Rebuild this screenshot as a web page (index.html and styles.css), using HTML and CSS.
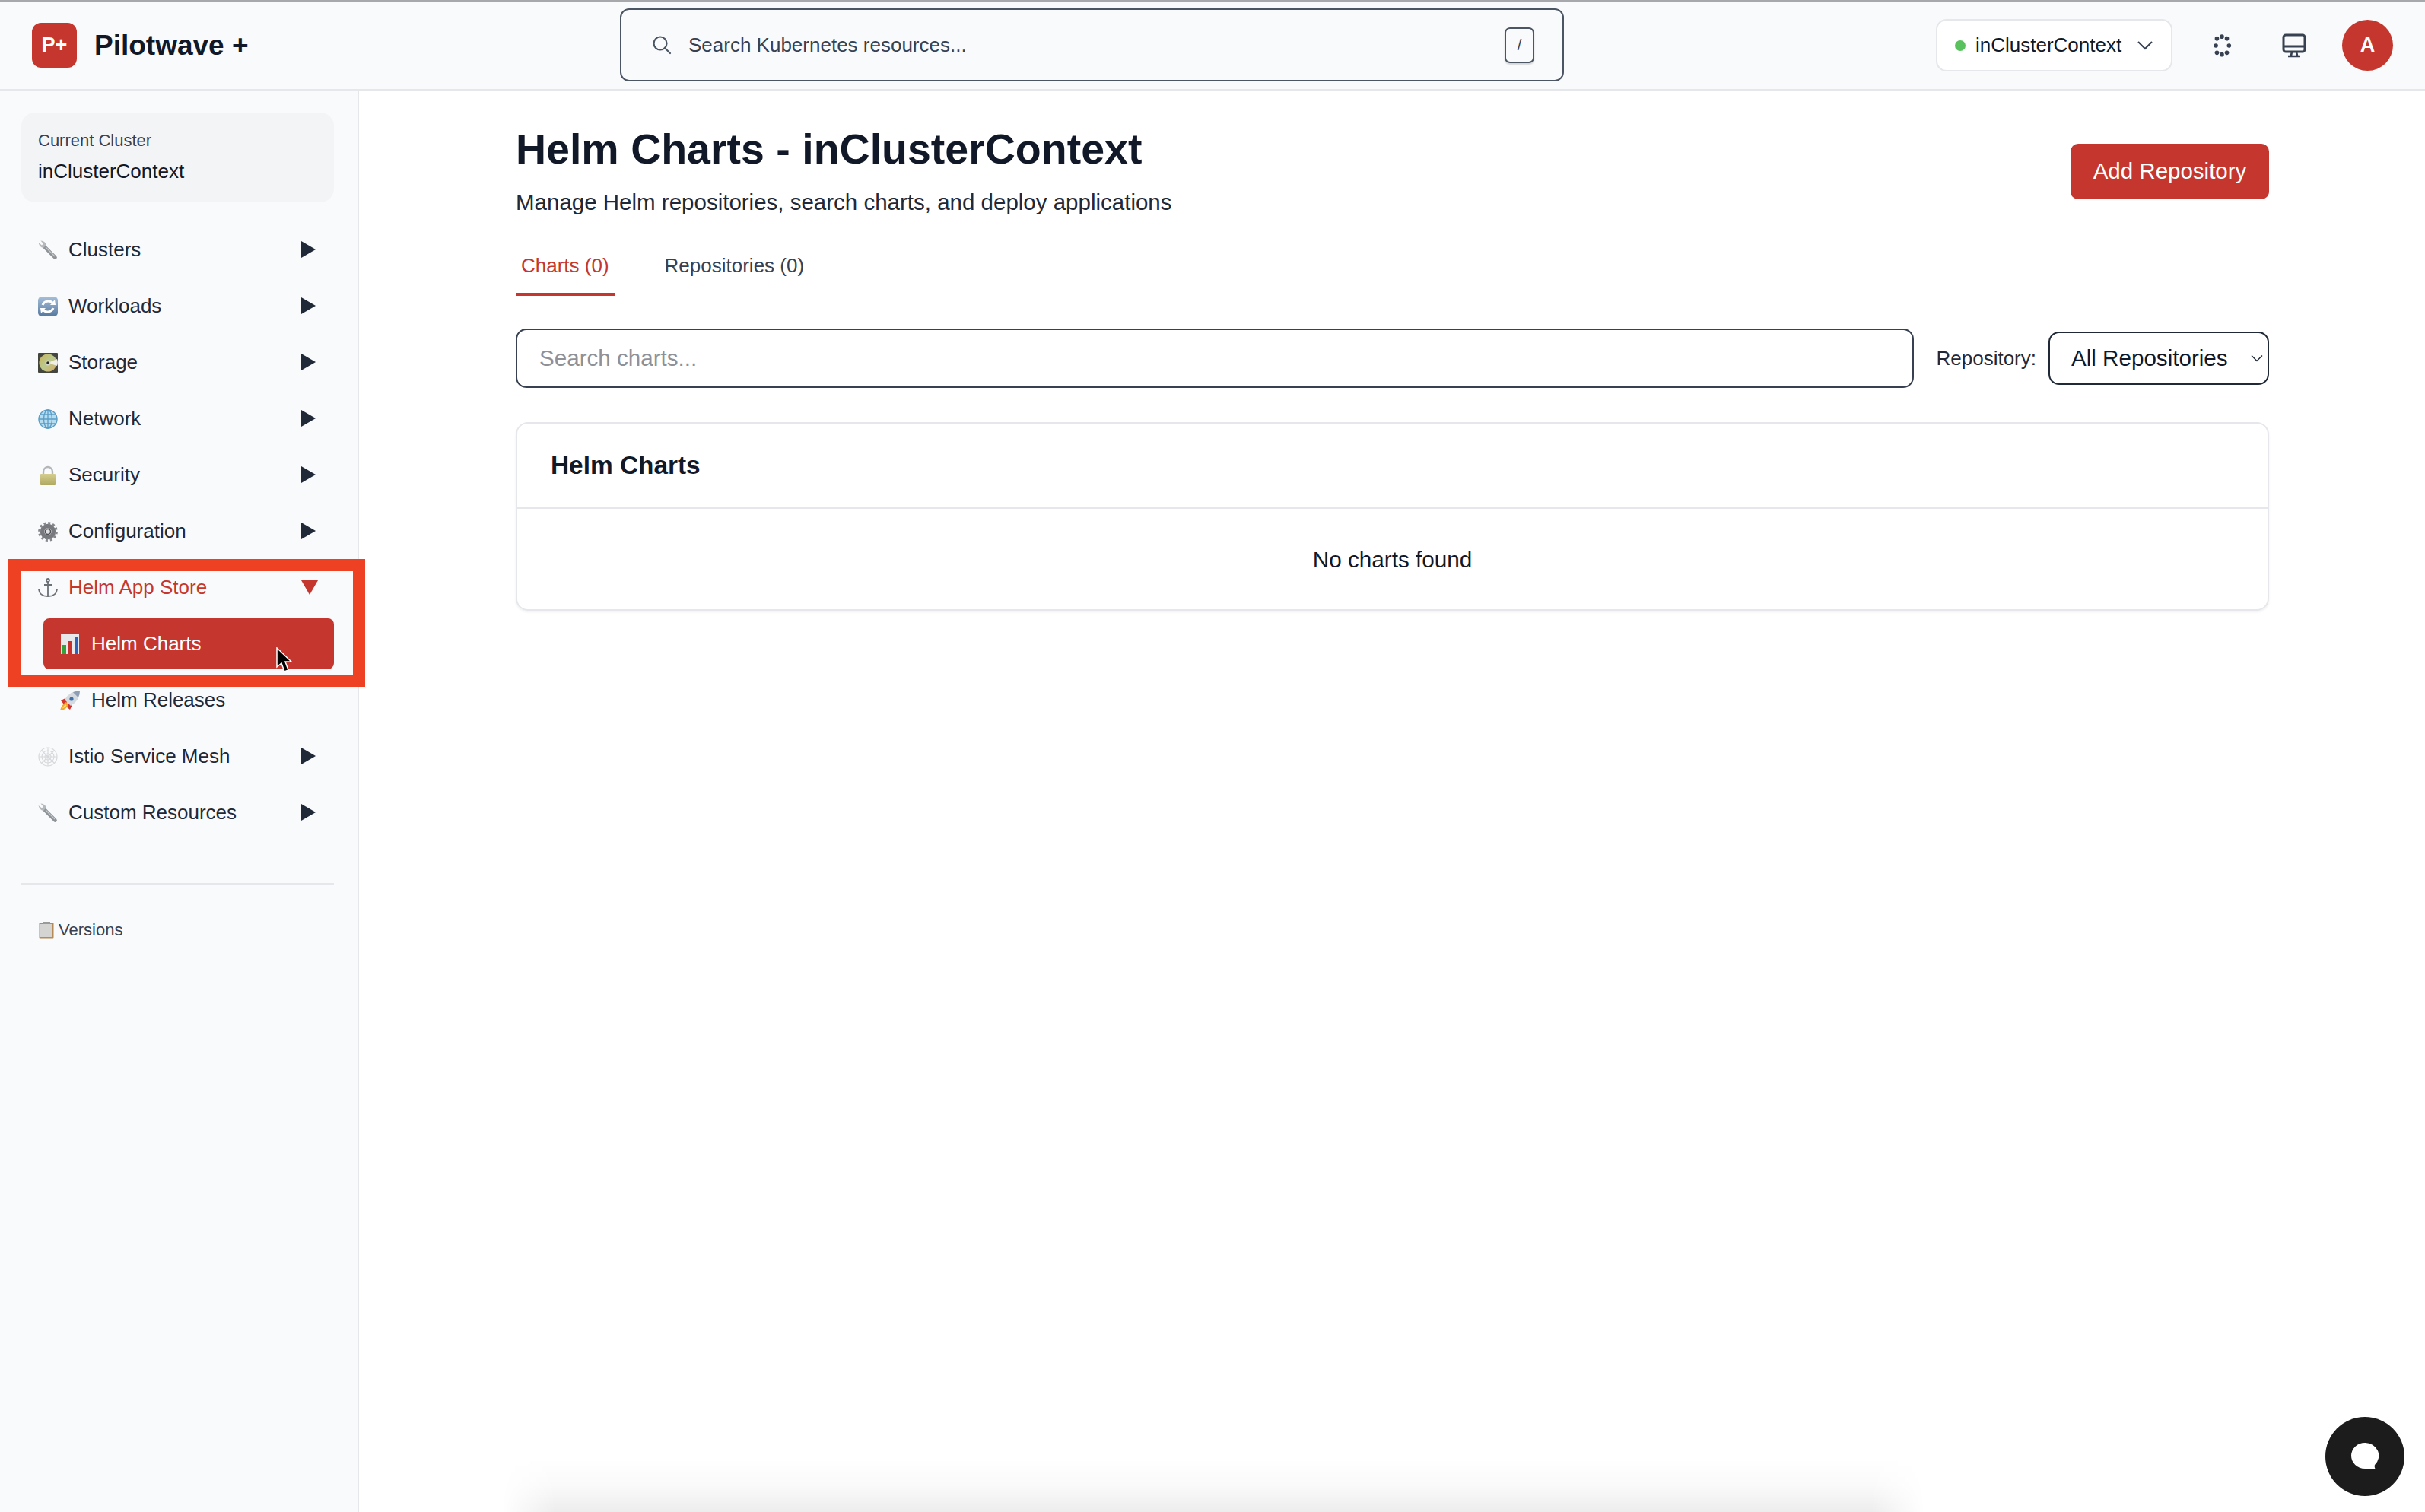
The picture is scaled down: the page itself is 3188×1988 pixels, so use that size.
FILE: index.html
```html
<!DOCTYPE html>
<html>
<head>
  <meta charset="utf-8">
  <title>Helm Charts - Pilotwave +</title>
  <link rel="stylesheet" href="styles.css">
</head>
<body>
  <svg class="defs" width="0" height="0">
    <symbol id="wrench" viewBox="0 0 26 26">
      <path d="M8 8 L22.5 22.5" stroke="#8f9398" stroke-width="4.6" stroke-linecap="round"/>
      <path d="M9 8 L7 10 Q2 9 0.5 3 L5 6.5 L7 4.5 L3.5 0.5 Q10 1 10.5 6 Z" fill="#b4b7bb"/>
      <path d="M10 9 L22 21" stroke="#c6c9cd" stroke-width="1.2"/>
    </symbol>
    <symbol id="tri" viewBox="0 0 19 22">
      <polygon points="0,0 19,11 0,22" fill="#1f2937"/>
    </symbol>
    <linearGradient id="blue-tile" x1="0" y1="0" x2="0" y2="1">
      <stop offset="0" stop-color="#a6bfd9"/>
      <stop offset="1" stop-color="#56789f"/>
    </linearGradient>
    <linearGradient id="disc" x1="0" y1="0" x2="1" y2="1">
      <stop offset="0" stop-color="#c9b35a"/>
      <stop offset="0.5" stop-color="#b9c98e"/>
      <stop offset="1" stop-color="#d9a860"/>
    </linearGradient>
    <linearGradient id="lock-body" x1="0" y1="0" x2="0" y2="1">
      <stop offset="0" stop-color="#d4cd8c"/>
      <stop offset="1" stop-color="#b0a963"/>
    </linearGradient>
  </svg>

  <header class="topbar">
    <div class="brand">
      <span class="logo">P+</span>
      <span class="brand-name">Pilotwave +</span>
    </div>
    <div class="global-search">
      <svg class="search-icon" viewBox="0 0 26 26" fill="none" stroke="#4b5563" stroke-width="2.2" stroke-linecap="round"><circle cx="11" cy="11" r="8.5"/><path d="M17 17 L24 24"/></svg>
      <span class="global-search-text">Search Kubernetes resources...</span>
      <kbd class="kbd">/</kbd>
    </div>
    <div class="top-actions">
      <div class="context">
        <span class="context-dot"></span>
        <span class="context-name">inClusterContext</span>
        <svg class="context-chev" viewBox="0 0 20 12" fill="none" stroke="#374151" stroke-width="2"><path d="M1 1 L10 10 L19 1"/></svg>
      </div>
      <svg class="top-icon" viewBox="0 0 30 32" fill="#374151">
        <circle cx="8" cy="6" r="3"/><circle cx="15" cy="3.3" r="3"/><circle cx="22" cy="6" r="3"/>
        <circle cx="6.5" cy="16" r="3"/><circle cx="25" cy="16" r="3"/>
        <circle cx="8" cy="26" r="3"/><circle cx="15" cy="28.5" r="3"/><circle cx="22" cy="26" r="3"/>
      </svg>
      <svg class="top-icon monitor" viewBox="0 0 32 32" fill="none" stroke="#374151" stroke-width="3"><rect x="2" y="2" width="28" height="22" rx="3"/><path d="M2 17 H30"/><path d="M13 24 L12 29 M19 24 L20 29 M8 30 H24" stroke-width="2.6"/></svg>
      <span class="avatar">A</span>
    </div>
  </header>

  <div class="shell">
    <aside class="sidebar">
      <div class="cluster-card">
        <div class="cluster-label">Current Cluster</div>
        <div class="cluster-name">inClusterContext</div>
      </div>

      <nav class="nav">
        <a class="nav-row">
          <svg class="nav-icon"><use href="#wrench"/></svg>
          <span class="nav-label">Clusters</span>
          <svg class="nav-arrow"><use href="#tri"/></svg>
        </a>
        <a class="nav-row">
          <svg class="nav-icon" viewBox="0 0 26 26"><rect width="26" height="26" rx="5" fill="url(#blue-tile)"/><path d="M6 11 A8 7.5 0 0 1 19 8" fill="none" stroke="#fff" stroke-width="3"/><polygon points="16,11 23,11 22,4" fill="#fff"/><path d="M20 15 A8 7.5 0 0 1 7 18" fill="none" stroke="#fff" stroke-width="3"/><polygon points="10,15 3,15 4,22" fill="#fff"/></svg>
          <span class="nav-label">Workloads</span>
          <svg class="nav-arrow"><use href="#tri"/></svg>
        </a>
        <a class="nav-row">
          <svg class="nav-icon" viewBox="0 0 26 26"><rect width="26" height="26" rx="1" fill="#45453f"/><circle cx="13" cy="13" r="11.5" fill="url(#disc)"/><path d="M13 13 L25 8 A12 12 0 0 1 25 17 Z" fill="#eeeee6"/><circle cx="13" cy="13" r="3.5" fill="#d8d8cc"/><circle cx="13" cy="13" r="1.8" fill="#222"/></svg>
          <span class="nav-label">Storage</span>
          <svg class="nav-arrow"><use href="#tri"/></svg>
        </a>
        <a class="nav-row">
          <svg class="nav-icon" viewBox="0 0 26 26" fill="none"><circle cx="13" cy="13" r="12.5" fill="#b6dcef"/><g stroke="#5a9cc6" stroke-width="1.3"><circle cx="13" cy="13" r="12"/><ellipse cx="13" cy="13" rx="5.5" ry="12"/><path d="M13 1 V25 M1 13 H25 M3 7 H23 M3 19 H23"/></g></svg>
          <span class="nav-label">Network</span>
          <svg class="nav-arrow"><use href="#tri"/></svg>
        </a>
        <a class="nav-row">
          <svg class="nav-icon" viewBox="0 0 26 26"><path d="M7 13 V8 A6 6 0 0 1 19 8 V13" fill="none" stroke="#b4b6ba" stroke-width="2.4"/><rect x="3" y="11" width="20" height="15" rx="1" fill="url(#lock-body)"/></svg>
          <span class="nav-label">Security</span>
          <svg class="nav-arrow"><use href="#tri"/></svg>
        </a>
        <a class="nav-row">
          <svg class="nav-icon" viewBox="0 0 26 26"><circle cx="13" cy="13" r="7.5" fill="none" stroke="#77797e" stroke-width="5.5"/><circle cx="13" cy="13" r="11.2" fill="none" stroke="#85888d" stroke-width="3.4" stroke-dasharray="3 2.86"/><circle cx="13" cy="13" r="3.6" fill="#dfe0e2" stroke="#4f5256" stroke-width="1.6"/></svg>
          <span class="nav-label">Configuration</span>
          <svg class="nav-arrow"><use href="#tri"/></svg>
        </a>
        <a class="nav-row nav-row-open">
          <svg class="nav-icon" viewBox="0 0 26 26" fill="none" stroke="#6b7076" stroke-width="1.8"><circle cx="13" cy="3" r="2"/><path d="M13 5 V24 M8 9 H18 M1 15 Q2 24 13 24 Q24 24 25 15"/></svg>
          <span class="nav-label">Helm App Store</span>
          <svg class="nav-arrow-down" viewBox="0 0 22 19"><polygon points="0,0 22,0 11,19" fill="#c5372e"/></svg>
        </a>
        <a class="nav-row nav-sub nav-active">
          <svg class="nav-icon" viewBox="0 0 24 26"><rect width="24" height="26" fill="#e6e8ea"/><rect x="2" y="14" width="5" height="12" fill="#35a13a"/><rect x="10" y="9" width="5" height="17" fill="#c9302c"/><rect x="18" y="3" width="5" height="23" fill="#2a62bd"/></svg>
          <span class="nav-label">Helm Charts</span>
        </a>
        <a class="nav-row nav-sub">
          <svg class="nav-icon rocket" viewBox="0 0 26 26"><path d="M7 10 L1 13 L5 18 L10 15 Z" fill="#d0342c"/><path d="M16 19 L13 25 L8 21 L11 16 Z" fill="#d0342c"/><path d="M8 15 Q2 18 0 26 Q9 25 11 18 Z" fill="#f4a62a"/><path d="M7 18 Q4 21 3 23.5 Q6.5 22.5 8.5 19.5 Z" fill="#f9e27c"/><path d="M26 0 Q13 0 6 12 L14 20 Q26 13 26 0 Z" fill="#d5dae0"/><path d="M26 0 Q21 0.2 17 2.2 L23.8 9 Q26 5 26 0 Z" fill="#8e9fb5"/><circle cx="15" cy="11" r="2.6" fill="#3f6fa8"/></svg>
          <span class="nav-label">Helm Releases</span>
        </a>
        <a class="nav-row">
          <svg class="nav-icon" viewBox="0 0 26 26" fill="none" stroke="#d6d8db" stroke-width="1.1"><circle cx="13" cy="13" r="12"/><circle cx="13" cy="13" r="8"/><circle cx="13" cy="13" r="4"/><path d="M13 1 V25 M1 13 H25 M4.5 4.5 L21.5 21.5 M21.5 4.5 L4.5 21.5"/></svg>
          <span class="nav-label">Istio Service Mesh</span>
          <svg class="nav-arrow"><use href="#tri"/></svg>
        </a>
        <a class="nav-row">
          <svg class="nav-icon"><use href="#wrench"/></svg>
          <span class="nav-label">Custom Resources</span>
          <svg class="nav-arrow"><use href="#tri"/></svg>
        </a>
      </nav>

      <div class="sidebar-foot">
        <svg class="foot-icon" viewBox="0 0 20 22"><rect x="0.5" y="1.5" width="19" height="20" rx="1" fill="#b58a55"/><rect x="2" y="3" width="16" height="17" fill="#d4d4d2"/><rect x="5" y="0" width="10" height="3" fill="#9a9a98"/></svg>
        <span>Versions</span>
      </div>
    </aside>

    <main class="content">
      <div class="page-head">
        <div>
          <h1 class="page-title">Helm Charts - inClusterContext</h1>
          <p class="page-sub">Manage Helm repositories, search charts, and deploy applications</p>
        </div>
        <button class="btn-primary">Add Repository</button>
      </div>

      <div class="tabs">
        <span class="tab tab-active">Charts (0)</span>
        <span class="tab">Repositories (0)</span>
      </div>

      <div class="filters">
        <input class="chart-search" type="text" placeholder="Search charts...">
        <label class="repo-label">Repository:</label>
        <div class="repo-select">
          <span>All Repositories</span>
          <svg viewBox="0 0 16 10" fill="none" stroke="#1f2937" stroke-width="1.4"><path d="M1 1.5 L8 8.5 L15 1.5"/></svg>
        </div>
      </div>

      <section class="card">
        <h2 class="card-title">Helm Charts</h2>
        <div class="card-empty">No charts found</div>
      </section>
    </main>
  </div>

  <!-- overlays -->
  <div class="callout"></div>
  <svg class="cursor" viewBox="0 0 22 34"><path d="M2 1 L2 26 L8 21 L12 32 L17 30 L13 19 L21 19 Z" fill="#000" stroke="#fff" stroke-width="1.5"/></svg>
  <div class="bottom-shadow"></div>
  <div class="chat-btn">
    <svg viewBox="0 0 36 36"><path d="M18 0 A18 17 0 1 0 18 34 Q25 35 32 35 Q30 32 31 29 A18 17 0 0 0 18 0 Z" fill="#fff"/></svg>
  </div>
</body>
</html>
```

FILE: styles.css
```css
* { box-sizing: border-box; }

html, body {
  margin: 0;
  height: 100%;
  overflow: hidden;
}

body {
  position: relative;
  background: #fff;
  color: #111827;
  font-family: "Liberation Sans", Arial, sans-serif;
}

.defs { position: absolute; }

/* top bar */
.topbar {
  height: 119px;
  display: flex;
  align-items: center;
  padding: 0 42px;
  background: #f9fafb;
  border-top: 2px solid #a6a8ac;
  border-bottom: 2px solid #e5e7eb;
}

.brand {
  display: flex;
  align-items: center;
  gap: 23px;
  width: 773px;
}

.logo {
  width: 59px;
  height: 59px;
  border-radius: 12px;
  background: #c5372e;
  color: #fff;
  font-size: 27px;
  font-weight: 700;
  display: flex;
  align-items: center;
  justify-content: center;
}

.brand-name {
  font-size: 37px;
  font-weight: 700;
  color: #111827;
}

.global-search {
  width: 1241px;
  height: 96px;
  margin-top: -1px;
  display: flex;
  align-items: center;
  padding: 0 37px 0 40px;
  border: 2px solid #4b5563;
  border-radius: 12px;
}

.search-icon { width: 26px; height: 26px; }

.global-search-text {
  margin-left: 22px;
  font-size: 26px;
  color: #374151;
}

.kbd {
  margin-left: auto;
  width: 39px;
  height: 47px;
  border: 2px solid #4b5563;
  border-radius: 7px;
  box-shadow: 0 2px 2px rgba(0, 0, 0, 0.15);
  font-family: "Liberation Sans", Arial, sans-serif;
  font-size: 20px;
  display: flex;
  align-items: center;
  justify-content: center;
  color: #374151;
}

.top-actions {
  display: flex;
  align-items: center;
  margin-left: auto;
}

.context {
  width: 311px;
  height: 69px;
  display: flex;
  align-items: center;
  padding: 0 24px 0 23px;
  background: #fff;
  border: 2px solid #e5e7eb;
  border-radius: 14px;
}

.context-dot {
  width: 14px;
  height: 14px;
  border-radius: 50%;
  background: #5ac15f;
}

.context-name {
  margin-left: 13px;
  font-size: 26px;
  color: #111827;
}

.context-chev {
  margin-left: auto;
  width: 20px;
  height: 12px;
}

.top-icon {
  width: 28px;
  height: 32px;
  margin-left: 51px;
}

.monitor {
  width: 32px;
  margin-left: 65px;
}

.avatar {
  width: 67px;
  height: 67px;
  margin-left: 47px;
  border-radius: 50%;
  background: #c5372e;
  color: #fff;
  font-size: 27px;
  font-weight: 700;
  display: flex;
  align-items: center;
  justify-content: center;
}

/* shell */
.shell {
  display: flex;
  height: calc(100% - 119px);
}

.sidebar {
  width: 472px;
  flex: none;
  padding: 29px 31px 0 28px;
  background: #f9fafb;
  border-right: 2px solid #e5e7eb;
}

.cluster-card {
  height: 118px;
  padding: 24px 22px;
  background: #f3f4f6;
  border-radius: 18px;
}

.cluster-label {
  font-size: 22px;
  line-height: 26px;
  color: #374151;
}

.cluster-name {
  margin-top: 12px;
  font-size: 26px;
  line-height: 30px;
  color: #111827;
}

.nav {
  margin-top: 29px;
  display: flex;
  flex-direction: column;
  gap: 7px;
}

.nav-row {
  height: 67px;
  display: flex;
  align-items: center;
  padding: 0 24px 0 22px;
  border-radius: 8px;
  color: #1f2937;
  font-size: 26px;
}

.nav-icon {
  width: 26px;
  height: 26px;
  flex: none;
}

.nav-label { margin-left: 14px; }

.nav-arrow {
  width: 19px;
  height: 22px;
  margin-top: -1px;
  margin-left: auto;
}

.nav-arrow-down {
  width: 22px;
  height: 19px;
  margin-left: auto;
  margin-right: -3px;
}

.nav-row-open { color: #c5372e; }

.nav-sub {
  margin-left: 29px;
  padding-left: 23px;
}

.nav-sub .nav-icon { width: 24px; }

.nav-sub .nav-label { margin-left: 16px; }

.nav-sub .rocket {
  width: 26px;
  margin: 0 -1px;
}

.nav-active {
  background: #c5372e;
  color: #fff;
}

.sidebar-foot {
  margin-top: 59px;
  padding: 47px 0 0 23px;
  border-top: 2px solid #e5e7eb;
  display: flex;
  align-items: center;
  gap: 6px;
  font-size: 22px;
  color: #374151;
}

.foot-icon { width: 20px; height: 22px; }

/* main */
.content {
  flex: 1;
  padding: 43px 205px 0 206px;
}

.page-head {
  display: flex;
  justify-content: space-between;
  align-items: center;
}

.page-title {
  margin: 0;
  font-size: 55.5px;
  line-height: 68px;
  font-weight: 700;
  color: #111827;
}

.page-sub {
  margin: 18px 0 0;
  font-size: 29.5px;
  line-height: 36px;
  color: #1f2937;
}

.btn-primary {
  width: 261px;
  height: 73px;
  margin-top: 4px;
  border: none;
  border-radius: 10px;
  background: #c5372e;
  color: #fff;
  font-family: inherit;
  font-size: 29.5px;
}

.tabs {
  margin-top: 30px;
  display: flex;
  gap: 59px;
}

.tab {
  padding: 0 7px;
  height: 75px;
  line-height: 70px;
  font-size: 26px;
  color: #374151;
}

.tab-active {
  color: #c5372e;
  border-bottom: 4px solid #c5372e;
}

.filters {
  margin-top: 43px;
  display: flex;
  align-items: center;
}

.chart-search {
  flex: 1;
  height: 78px;
  padding: 0 29px;
  border: 2px solid #374151;
  border-radius: 14px;
  background: #fff;
  font-family: inherit;
  font-size: 29.6px;
}

.chart-search::placeholder { color: #8f9197; opacity: 1; }

.repo-label {
  margin-left: 30px;
  font-size: 26px;
  color: #1f2937;
}

.repo-select {
  width: 290px;
  height: 70px;
  margin-left: 16px;
  display: flex;
  align-items: center;
  justify-content: space-between;
  padding: 0 6px 0 28px;
  border: 2px solid #1f2937;
  border-radius: 14px;
  font-size: 29.6px;
  color: #111827;
}

.repo-select svg { width: 16px; height: 10px; }

.card {
  margin-top: 45px;
  height: 248px;
  border: 2px solid #e5e7eb;
  border-radius: 16px;
  box-shadow: 0 2px 3px rgba(0, 0, 0, 0.06);
}

.card-title {
  margin: 0;
  height: 112px;
  padding-left: 44px;
  line-height: 110px;
  font-size: 33.4px;
  font-weight: 700;
  color: #111827;
  border-bottom: 2px solid #e5e7eb;
}

.card-empty {
  text-align: center;
  font-size: 29.7px;
  line-height: 134px;
  color: #111827;
}

/* overlays */
.callout {
  position: absolute;
  left: 11px;
  top: 735px;
  width: 469px;
  height: 168px;
  border: 16px solid #ee4023;
}

.cursor {
  position: absolute;
  left: 362px;
  top: 851px;
  width: 22px;
  height: 34px;
}

.bottom-shadow {
  position: absolute;
  left: 660px;
  bottom: 0;
  width: 1870px;
  height: 71px;
  background: linear-gradient(to bottom, rgba(0, 0, 0, 0), rgba(0, 0, 0, 0.02) 50%, rgba(0, 0, 0, 0.07));
  -webkit-mask-image: linear-gradient(to right, transparent, #000 70px, #000 calc(100% - 70px), transparent);
  mask-image: linear-gradient(to right, transparent, #000 70px, #000 calc(100% - 70px), transparent);
}

.chat-btn {
  position: absolute;
  left: 3057px;
  top: 1863px;
  width: 104px;
  height: 104px;
  border-radius: 50%;
  background: #1c1c1c;
  display: flex;
  align-items: center;
  justify-content: center;
}

.chat-btn svg { width: 36px; height: 36px; }
```
